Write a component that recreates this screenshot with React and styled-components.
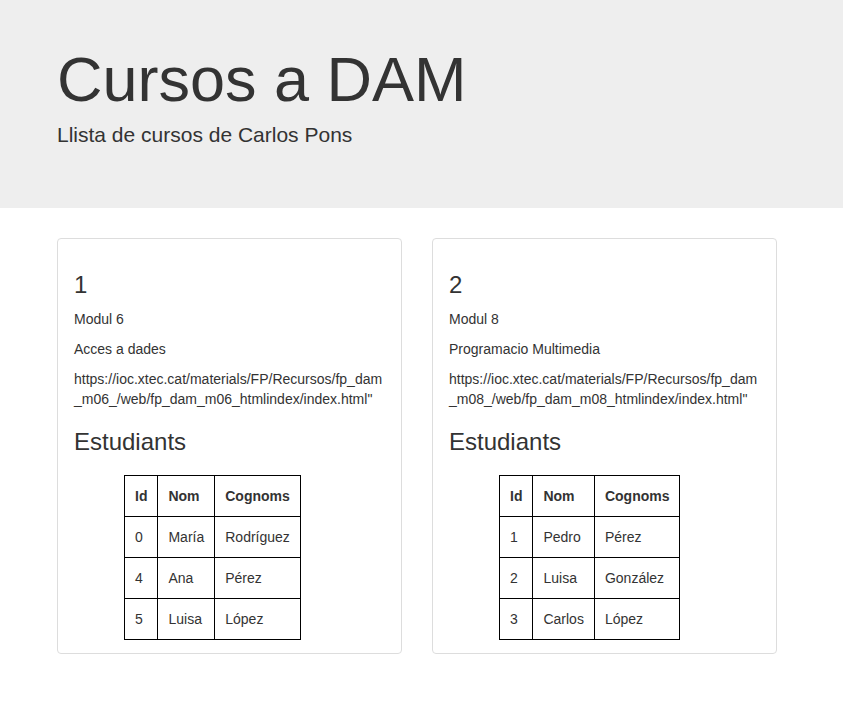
import React from "react";
import styled, { createGlobalStyle } from "styled-components";

const GlobalStyle = createGlobalStyle`
  body {
    margin: 0;
    font-family: "Liberation Sans", Arial, sans-serif;
    font-size: 14px;
    line-height: 1.42857;
    color: #333;
    background: #fff;
  }
`;

const Jumbotron = styled.header`
  background: #eee;
  padding: 45px 0 58px;
  margin-bottom: 30px;
`;

const Container = styled.div`
  width: 720px;
  margin-left: 57px;
`;

const Title = styled.h1`
  font-size: 63px;
  font-weight: 500;
  line-height: 69px;
  margin: 0;
`;

const Lead = styled.p`
  font-size: 21px;
  line-height: 30px;
  margin: 6px 0 0;
`;

const CardGrid = styled.div`
  display: grid;
  grid-template-columns: 345px 345px;
  gap: 30px;
  align-items: start;
`;

const Card = styled.section`
  border: 1px solid #ddd;
  border-radius: 4px;
  padding: 13px 16px;
`;

const Heading = styled.h3`
  font-size: 24px;
  font-weight: 500;
  line-height: 1.1;
  margin: ${({ $top }) => ($top ? "20px 0 12px" : "19px 0 10px")};
`;

const Text = styled.p`
  margin: 0 0 10px;
  overflow-wrap: break-word;
  word-break: break-all;
`;

const Table = styled.table`
  border-collapse: collapse;
  margin: 19px 0 0 50px;
`;

const Cell = styled.td`
  border: 1px solid #000;
  padding: 10px;
  line-height: 20px;
  text-align: left;
  font-weight: ${({ $head }) => ($head ? 700 : 400)};
`;

const cursos = [
  {
    id: 1,
    modul: "Modul 6",
    nom: "Acces a dades",
    url: 'https://ioc.xtec.cat/materials/FP/Recursos/fp_dam_m06_/web/fp_dam_m06_htmlindex/index.html"',
    estudiants: [
      { id: 0, nom: "María", cognoms: "Rodríguez" },
      { id: 4, nom: "Ana", cognoms: "Pérez" },
      { id: 5, nom: "Luisa", cognoms: "López" },
    ],
  },
  {
    id: 2,
    modul: "Modul 8",
    nom: "Programacio Multimedia",
    url: 'https://ioc.xtec.cat/materials/FP/Recursos/fp_dam_m08_/web/fp_dam_m08_htmlindex/index.html"',
    estudiants: [
      { id: 1, nom: "Pedro", cognoms: "Pérez" },
      { id: 2, nom: "Luisa", cognoms: "González" },
      { id: 3, nom: "Carlos", cognoms: "López" },
    ],
  },
];

const App = () => {
  return (
    <>
      <GlobalStyle />
      <Jumbotron>
        <Container>
          <Title>Cursos a DAM</Title>
          <Lead>Llista de cursos de Carlos Pons</Lead>
        </Container>
      </Jumbotron>
      <Container>
        <CardGrid>
          {cursos.map((curs) => (
            <Card key={curs.id}>
              <Heading $top>{curs.id}</Heading>
              <Text>{curs.modul}</Text>
              <Text>{curs.nom}</Text>
              <Text>{curs.url}</Text>
              <Heading>Estudiants</Heading>
              <Table>
                <thead>
                  <tr>
                    <Cell as="th" $head>Id</Cell>
                    <Cell as="th" $head>Nom</Cell>
                    <Cell as="th" $head>Cognoms</Cell>
                  </tr>
                </thead>
                <tbody>
                  {curs.estudiants.map((e) => (
                    <tr key={e.id}>
                      <Cell>{e.id}</Cell>
                      <Cell>{e.nom}</Cell>
                      <Cell>{e.cognoms}</Cell>
                    </tr>
                  ))}
                </tbody>
              </Table>
            </Card>
          ))}
        </CardGrid>
      </Container>
    </>
  );
};

export default App;
